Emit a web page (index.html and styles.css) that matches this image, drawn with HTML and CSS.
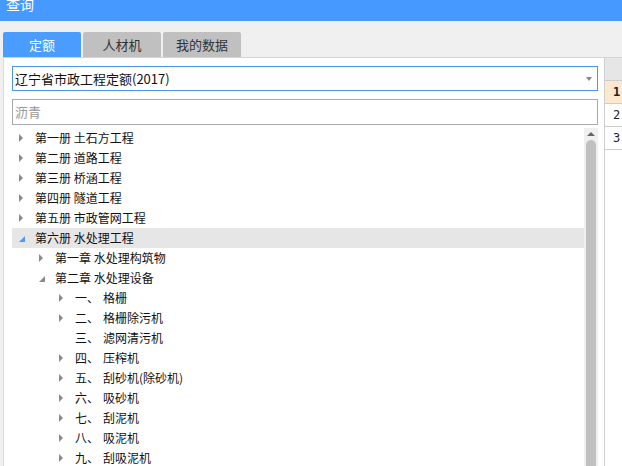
FILE: index.html
```html
<!DOCTYPE html>
<html>
<head>
<meta charset="utf-8">
<link rel="stylesheet" href="styles.css">
</head>
<body>
<div class="titlebar"><span class="title">查询</span></div>
<div class="main">
  <div class="left">
    <div class="tabs">
      <div class="tab active">定额</div>
      <div class="tab">人材机</div>
      <div class="tab">我的数据</div>
    </div>
    <div class="panel">
      <div class="select"><span class="sel-text">辽宁省市政工程定额(2017)</span><span class="caret"></span></div>
      <div class="search">沥青</div>
      <div class="tree">
        <div class="rows">
          <div class="row l0"><i class="arr"><b class="col"></b></i><span>第一册 土石方工程</span></div>
          <div class="row l0"><i class="arr"><b class="col"></b></i><span>第二册 道路工程</span></div>
          <div class="row l0"><i class="arr"><b class="col"></b></i><span>第三册 桥涵工程</span></div>
          <div class="row l0"><i class="arr"><b class="col"></b></i><span>第四册 隧道工程</span></div>
          <div class="row l0"><i class="arr"><b class="col"></b></i><span>第五册 市政管网工程</span></div>
          <div class="row l0 hl"><i class="arr"><b class="exp blue"></b></i><span>第六册 水处理工程</span></div>
          <div class="row l1"><i class="arr"><b class="col"></b></i><span>第一章 水处理构筑物</span></div>
          <div class="row l1"><i class="arr"><b class="exp"></b></i><span>第二章 水处理设备</span></div>
          <div class="row l2"><i class="arr"><b class="col"></b></i><span class="num">一、</span><span>格栅</span></div>
          <div class="row l2"><i class="arr"><b class="col"></b></i><span class="num">二、</span><span>格栅除污机</span></div>
          <div class="row l2"><i class="arr"></i><span class="num">三、</span><span>滤网清污机</span></div>
          <div class="row l2"><i class="arr"><b class="col"></b></i><span class="num">四、</span><span>压榨机</span></div>
          <div class="row l2"><i class="arr"><b class="col"></b></i><span class="num">五、</span><span>刮砂机(除砂机)</span></div>
          <div class="row l2"><i class="arr"><b class="col"></b></i><span class="num">六、</span><span>吸砂机</span></div>
          <div class="row l2"><i class="arr"><b class="col"></b></i><span class="num">七、</span><span>刮泥机</span></div>
          <div class="row l2"><i class="arr"><b class="col"></b></i><span class="num">八、</span><span>吸泥机</span></div>
          <div class="row l2"><i class="arr"><b class="col"></b></i><span class="num">九、</span><span>刮吸泥机</span></div>
        </div>
        <div class="scrollbar"><div class="up"></div><div class="thumb"></div></div>
      </div>
    </div>
  </div>
  <div class="right">
    <div class="cell head"></div>
    <div class="cell cur">1</div>
    <div class="cell">2</div>
    <div class="cell">3</div>
  </div>
</div>
</body>
</html>
```

FILE: styles.css
```css
html, body {
  margin: 0;
  padding: 0;
}
body {
  width: 622px;
  height: 466px;
  overflow: hidden;
  background: #f0f0f0;
  font-family: "Microsoft YaHei", "Noto Sans CJK SC", "Noto Sans", sans-serif;
  font-size: 12px;
  color: #111;
}
.titlebar {
  height: 21px;
  background: #4599ff;
  color: #fff;
  overflow: hidden;
  padding-left: 6px;
}
.title {
  display: block;
  font-size: 14px;
  line-height: 14px;
  margin-top: -3px;
}
.main {
  display: flex;
  height: 445px;
}
.left {
  width: 605px;
  display: flex;
  flex-direction: column;
}
.tabs {
  height: 36px;
  box-sizing: border-box;
  padding: 11px 0 0 3px;
  display: flex;
  gap: 2px;
}
.tab {
  width: 78px;
  height: 25px;
  box-sizing: border-box;
  padding-bottom: 1px;
  border-radius: 2px 2px 0 0;
  background: #c0c0c0;
  color: #333;
  font-size: 13px;
  display: flex;
  align-items: center;
  justify-content: center;
}
.tab.active {
  background: #4a9dff;
  color: #fff;
}
.panel {
  flex: 1;
  margin-left: 3px;
  background: #fff;
  border-top: 1px solid #d4d4d4;
  border-left: 1px solid #dcdcdc;
  border-right: 1px solid #cfcfcf;
  padding: 8px 6px 0 8px;
  display: flex;
  flex-direction: column;
  overflow: hidden;
}
.select {
  height: 25px;
  box-sizing: border-box;
  border: 1px solid #4a96ef;
  display: flex;
  align-items: center;
  justify-content: space-between;
  padding: 0 5px 1px 2px;
  font-size: 13px;
  color: #111;
}
.caret {
  width: 0;
  height: 0;
  margin-top: 1px;
  border-top: 4px solid #888;
  border-left: 3px solid transparent;
  border-right: 3px solid transparent;
}
.search {
  margin-top: 8px;
  height: 26px;
  box-sizing: border-box;
  border: 1px solid #aaa;
  padding: 0 0 1px 2px;
  display: flex;
  align-items: center;
  font-size: 13px;
  color: #999;
}
.tree {
  margin-top: 3px;
  flex: 1;
  display: flex;
  overflow: hidden;
}
.rows {
  flex: 1;
}
.row {
  height: 20px;
  box-sizing: border-box;
  padding-bottom: 2px;
  display: flex;
  align-items: center;
  white-space: nowrap;
}
.row.hl {
  background: #e6e6e6;
}
.l0 { padding-left: 7px; }
.l1 { padding-left: 27px; }
.l2 { padding-left: 47px; }
.arr {
  width: 16px;
  height: 18px;
  margin-top: 2px;
  display: flex;
  align-items: center;
  flex: none;
}
.col {
  width: 0;
  height: 0;
  border-left: 4px solid #8a8a8a;
  border-top: 4px solid transparent;
  border-bottom: 4px solid transparent;
}
.exp {
  width: 0;
  height: 0;
  margin-top: 2px;
  border-bottom: 6px solid #8a8a8a;
  border-left: 6px solid transparent;
}
.exp.blue {
  border-bottom-color: #4a9bf5;
}
.num {
  width: 28px;
  flex: none;
}
.scrollbar {
  width: 14px;
  background: #f0f0f0;
  display: flex;
  flex-direction: column;
  align-items: center;
  flex: none;
}
.up {
  margin-top: 4px;
  width: 0;
  height: 0;
  border-bottom: 4px solid #666;
  border-left: 4px solid transparent;
  border-right: 4px solid transparent;
}
.thumb {
  margin-top: 4px;
  width: 10px;
  flex: 1;
  background: #c1c1c1;
  border-radius: 5px 5px 0 0;
}
.right {
  flex: 1;
  border-top: 1px solid #d4d4d4;
  margin-top: 36px;
  background: #fff;
}
.cell {
  height: 22px;
  border-bottom: 1px solid #cccccc;
  display: flex;
  align-items: center;
  padding-left: 8px;
  font-family: "DejaVu Sans Mono", "Liberation Mono", monospace;
  font-size: 12px;
  color: #222;
}
.cell.head {
  background: #e6e6e6;
}
.cell.cur {
  background: #fde8cf;
  font-weight: bold;
}
```
